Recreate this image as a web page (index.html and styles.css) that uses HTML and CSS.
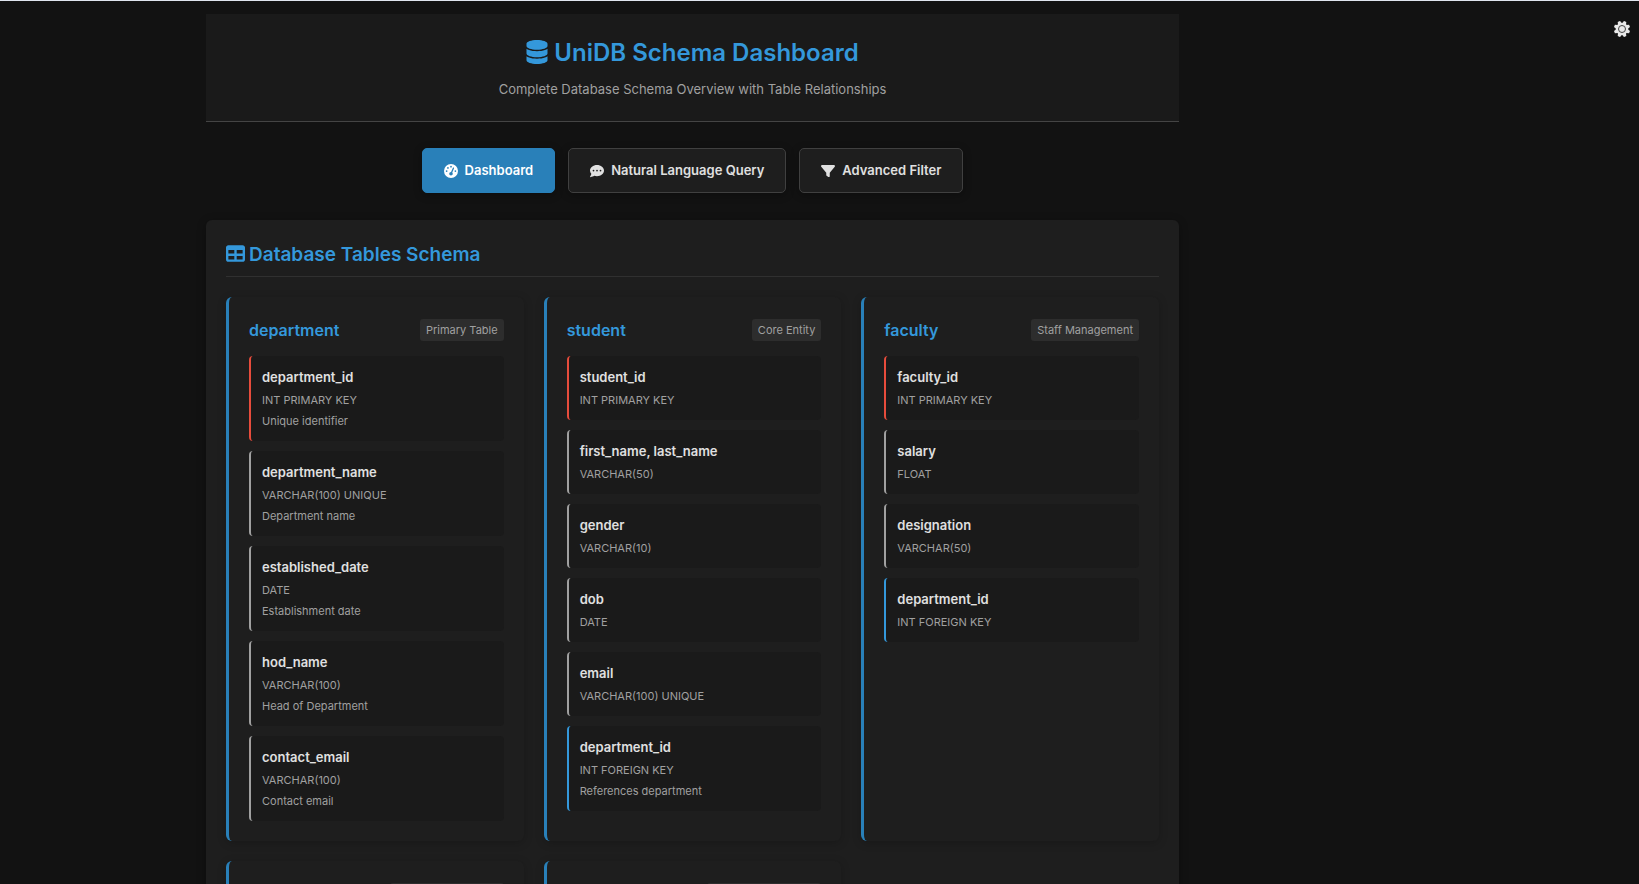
FILE: index.html
```html
<!DOCTYPE html>
<html lang="en">
<head>
<meta charset="utf-8">
<meta name="viewport" content="width=device-width, initial-scale=1">
<title>UniDB Schema Dashboard</title>
<link rel="stylesheet" href="styles.css">
</head>
<body>
<div class="layout">
<main class="container">
  <header class="page-header">
    <h1 class="page-title"><svg class="icon-database" viewBox="0 0 448 512" aria-hidden="true"><path d="M448 80v48c0 44.200-100.300 80-224 80S0 172.200 0 128V80C0 35.800 100.300 0 224 0s224 35.800 224 80zM393.200 214.700c20.800-7.400 39.900-16.900 54.800-28.600V288c0 44.200-100.300 80-224 80S0 332.200 0 288V186.100c14.900 11.800 34 21.200 54.800 28.600C99.700 230.700 159.500 240 224 240s124.300-9.300 169.200-25.300zM0 346.100c14.900 11.800 34 21.200 54.800 28.600C99.700 390.700 159.500 400 224 400s124.300-9.300 169.200-25.300c20.800-7.400 39.900-16.900 54.800-28.600V432c0 44.200-100.300 80-224 80S0 476.200 0 432V346.100z"/></svg>UniDB Schema Dashboard</h1>
    <p class="page-subtitle">Complete Database Schema Overview with Table Relationships</p>
  </header>

  <nav class="tabs" aria-label="Views">
    <button class="tab tab-active" type="button"><svg class="icon" viewBox="0 0 512 512" aria-hidden="true"><path fill-rule="evenodd" d="M0 256a256 256 0 1 1 512 0A256 256 0 1 1 0 256zM288 96a32 32 0 1 0-64 0 32 32 0 1 0 64 0zM256 416c35.300 0 64-28.700 64-64 0-17.400-6.900-33.100-18.100-44.600L366 161.700c5.300-12.100-.2-26.300-12.300-31.600s-26.300 .2-31.600 12.300L257.900 288H256c-35.300 0-64 28.700-64 64s28.700 64 64 64zM176 144a32 32 0 1 0-64 0 32 32 0 1 0 64 0zM96 288a32 32 0 1 0 0-64 32 32 0 1 0 0 64zM448 256a32 32 0 1 0-64 0 32 32 0 1 0 64 0z"/></svg>Dashboard</button>
    <button class="tab" type="button"><svg class="icon" viewBox="0 0 512 512" aria-hidden="true"><path fill-rule="evenodd" d="M256 448c141.400 0 256-93.100 256-208S397.400 32 256 32 0 125.100 0 240c0 45.100 17.700 86.800 47.700 120.900-1.900 24.500-11.400 46.300-21.400 62.900-5.500 9.200-11.100 16.600-15.200 21.600C4.600 453-1 462 .8 469.800 2.500 475.500 8.800 480 16 480c28.700 0 57.600-8.900 81.600-19.300 22.900-10 42.400-21.900 54.300-30.600 31.800 11.500 67 17.900 104.100 17.900zM128 208a32 32 0 1 1 0 64 32 32 0 1 1 0-64zM256 208a32 32 0 1 1 0 64 32 32 0 1 1 0-64zM352 240a32 32 0 1 1 64 0 32 32 0 1 1-64 0z"/></svg>Natural Language Query</button>
    <button class="tab" type="button"><svg class="icon" viewBox="0 0 512 512" aria-hidden="true"><path d="M3.900 54.900C10.500 40.900 24.500 32 40 32H472c15.500 0 29.500 8.900 36.100 22.900s4.600 30.500-5.200 42.500L320 320.900V448c0 12.100-6.800 23.200-17.700 28.600s-23.800 4.300-33.500-3l-64-48c-8.100-6-12.800-15.500-12.800-25.600V320.900L9 97.300C-.7 85.400-2.800 68.800 3.900 54.900z"/></svg>Advanced Filter</button>
  </nav>

  <section class="panel">
    <h2 class="panel-title"><svg class="icon-table" viewBox="0 0 512 512" aria-hidden="true"><path fill-rule="evenodd" d="M64 256V160H224v96H64zm0 64H224v96H64V320zm224 96V320H448v96H288zM448 256H288V160H448v96zM64 32C28.700 32 0 60.700 0 96V416c0 35.300 28.700 64 64 64H448c35.300 0 64-28.700 64-64V96c0-35.300-28.700-64-64-64H64z"/></svg>Database Tables Schema</h2>
    <div class="cards">
      <article class="card">
        <div class="card-head"><h3 class="card-title">department</h3><span class="badge">Primary Table</span></div>
        <ul class="fields">
          <li class="field field-primary"><div class="name">department_id</div><div class="type">INT PRIMARY KEY</div><div class="note">Unique identifier</div></li>
          <li class="field"><div class="name">department_name</div><div class="type">VARCHAR(100) UNIQUE</div><div class="note">Department name</div></li>
          <li class="field"><div class="name">established_date</div><div class="type">DATE</div><div class="note">Establishment date</div></li>
          <li class="field"><div class="name">hod_name</div><div class="type">VARCHAR(100)</div><div class="note">Head of Department</div></li>
          <li class="field"><div class="name">contact_email</div><div class="type">VARCHAR(100)</div><div class="note">Contact email</div></li>
        </ul>
      </article>
      <article class="card">
        <div class="card-head"><h3 class="card-title">student</h3><span class="badge">Core Entity</span></div>
        <ul class="fields">
          <li class="field field-primary"><div class="name">student_id</div><div class="type">INT PRIMARY KEY</div></li>
          <li class="field"><div class="name">first_name, last_name</div><div class="type">VARCHAR(50)</div></li>
          <li class="field"><div class="name">gender</div><div class="type">VARCHAR(10)</div></li>
          <li class="field"><div class="name">dob</div><div class="type">DATE</div></li>
          <li class="field"><div class="name">email</div><div class="type">VARCHAR(100) UNIQUE</div></li>
          <li class="field field-foreign"><div class="name">department_id</div><div class="type">INT FOREIGN KEY</div><div class="note">References department</div></li>
        </ul>
      </article>
      <article class="card">
        <div class="card-head"><h3 class="card-title">faculty</h3><span class="badge">Staff Management</span></div>
        <ul class="fields">
          <li class="field field-primary"><div class="name">faculty_id</div><div class="type">INT PRIMARY KEY</div></li>
          <li class="field"><div class="name">salary</div><div class="type">FLOAT</div></li>
          <li class="field"><div class="name">designation</div><div class="type">VARCHAR(50)</div></li>
          <li class="field field-foreign"><div class="name">department_id</div><div class="type">INT FOREIGN KEY</div></li>
        </ul>
      </article>
      <article class="card">
        <div class="card-head card-head-end"><span class="badge badge-wide"></span></div>
      </article>
      <article class="card">
        <div class="card-head card-head-end"><span class="badge badge-wide"></span></div>
      </article>
    </div>
  </section>
</main>
<aside class="tools">
  <button class="settings" type="button" aria-label="Settings"><svg class="icon-gear" viewBox="-8 -8 16 16" aria-hidden="true"><g transform="rotate(22.500)"><circle class="gear-body" r="6.200"/><path id="teeth" d="M-2-5.500 -1.300-8.200H1.300L2-5.500V5.500L1.300 8.200H-1.300L-2 5.500z"/><use href="#teeth" transform="rotate(45)"/><use href="#teeth" transform="rotate(90)"/><use href="#teeth" transform="rotate(135)"/></g><circle class="gear-hub" r="3.500"/></svg></button>
</aside>
</div>
</body>
</html>
```
FILE: styles.css
```css
* {
  box-sizing: border-box;
  margin: 0;
}

body {
  height: 100vh;
  overflow: hidden;
  border-top: 1px solid #dfe5ee;
  background: #121212;
  color: #e0e0e0;
  font-family: Inter, "Liberation Sans", sans-serif;
  font-size: 13px;
}

.layout {
  display: grid;
  grid-template-columns: minmax(0, 1fr) 254px;
}

.container {
  width: 100%;
  max-width: 973px;
  margin: 0 auto;
  padding-top: 13px;
}

.page-header {
  padding: 26px 20px 20px;
  border-bottom: 1px solid #444;
  background: #1a1a1a;
  text-align: center;
}

.page-title {
  display: flex;
  align-items: flex-start;
  justify-content: center;
  gap: 6px;
  color: #3498db;
  font-size: 24px;
  font-weight: 600;
  line-height: 26px;
}

.page-title svg,
.panel-title svg,
.tab svg {
  fill: currentColor;
}

.icon-database {
  width: 22px;
  height: 24px;
}

.page-subtitle {
  padding: 12px 0 1px;
  color: #a0a0a0;
  line-height: 22px;
}

.tabs {
  display: flex;
  justify-content: center;
  gap: 13px;
  margin: 26px 0 27px;
}

.tab {
  display: flex;
  align-items: center;
  gap: 7px;
  padding: 11px 21px;
  border: 1px solid #404040;
  border-radius: 5px;
  background: #1e1e1e;
  box-shadow: 0 2px 8px rgba(0, 0, 0, 0.3);
  color: #e0e0e0;
  font: 600 13px/21px Inter, "Liberation Sans", sans-serif;
}

.tab-active {
  border-color: #2980b9;
  background: #2980b9;
  color: #fff;
}

.icon {
  width: 14px;
  height: 14px;
}

.panel {
  padding: 20px;
  border-radius: 6px;
  background: #1e1e1e;
  box-shadow: 0 2px 10px rgba(0, 0, 0, 0.3);
}

.panel-title {
  display: flex;
  align-items: flex-start;
  gap: 4px;
  margin-bottom: 20px;
  padding-bottom: 6px;
  border-bottom: 1px solid #303030;
  color: #3498db;
  font-size: 19px;
  font-weight: 600;
  line-height: 30px;
}

.icon-table {
  width: 19px;
  height: 19px;
  margin-top: 4px;
}

.cards {
  display: grid;
  grid-template-columns: repeat(3, minmax(0, 1fr));
  gap: 20px;
}

.card {
  padding: 20px;
  border-left: 3px solid #2980b9;
  border-radius: 6px;
  background: #1e1e1e;
  box-shadow: 0 2px 10px rgba(0, 0, 0, 0.2);
}

.card-head {
  display: flex;
  align-items: center;
  justify-content: space-between;
  height: 25px;
  margin-bottom: 14px;
}

.card-head-end {
  justify-content: flex-end;
}

.card-title {
  color: #3498db;
  font-size: 16px;
  font-weight: 600;
}

.badge {
  padding: 2px 6px;
  border-radius: 3px;
  background: #2d2d2d;
  color: #a0a0a0;
  font-size: 11px;
  line-height: 18px;
}

.badge-wide {
  width: 114px;
  height: 22px;
}

.fields {
  display: grid;
  gap: 10px;
  padding: 0;
  list-style: none;
}

.field {
  padding: 10px 11px;
  border-left: 2px solid #a0a0a0;
  border-radius: 4px;
  background: #1a1a1a;
}

.field-primary {
  border-left-color: #e74c3c;
}

.field-foreign {
  border-left-color: #3498db;
}

.name {
  margin-bottom: 2px;
  font-weight: 600;
  line-height: 22px;
}

.type {
  color: #a0a0a0;
  font-size: 11px;
  line-height: 20px;
}

.note {
  padding-top: 2px;
  color: #a0a0a0;
  font-size: 11px;
  line-height: 19px;
}

.tools {
  display: flex;
  align-items: flex-start;
  justify-content: flex-end;
  padding: 20px 9px;
}

.settings {
  padding: 0;
  border: 0;
  background: transparent;
}

.icon-gear {
  display: block;
  width: 16px;
  height: 16px;
  fill: #e8e8e8;
}

.gear-hub {
  stroke: #444;
}
```
